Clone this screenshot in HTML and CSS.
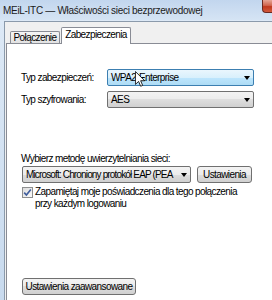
FILE: index.html
```html
<!DOCTYPE html>
<html>

<head>
  <title>MEiL-ITC — Właściwości sieci bezprzewodowej</title>
  <link rel="stylesheet" href="styles.css">
</head>

<body>
  <div class="window">
    <div class="titlebar">
      <span class="title">MEiL-ITC — Właściwości sieci bezprzewodowej</span>
      <span class="close"></span>
    </div>
    <div class="frame">
      <div class="client">
        <div class="tabs">
          <div class="tab">Połączenie</div>
          <div class="tab active">Zabezpieczenia</div>
        </div>
        <div class="panel">
          <div class="row">
            <span class="label">Typ zabezpieczeń:</span>
            <div class="combo hover"><span class="value">WPA2-Enterprise</span><span class="arrow"></span></div>
          </div>
          <div class="row second">
            <span class="label">Typ szyfrowania:</span>
            <div class="combo"><span class="value">AES</span><span class="arrow"></span></div>
          </div>

          <div class="method-label">Wybierz metodę uwierzytelniania sieci:</div>
          <div class="method-row">
            <div class="combo method"><span class="value">Microsoft: Chroniony protokół EAP (PEA</span><span class="arrow"></span></div>
            <div class="button settings">Ustawienia</div>
          </div>

          <div class="check-row">
            <span class="checkbox">
              <svg width="9" height="9" viewBox="0 0 9 9">
                <path d="M1.2 4.6 L3.4 7 L7.8 1.4" fill="none" stroke="#3f5d9c" stroke-width="1.6"/>
              </svg>
            </span>
            <span class="check-text">Zapamiętaj moje poświadczenia dla tego połączenia<br>przy każdym logowaniu</span>
          </div>

          <div class="button advanced">Ustawienia zaawansowane</div>
        </div>
      </div>
    </div>
  </div>

  <!-- mouse pointer over the first combo -->
  <svg class="cursor" width="10" height="16" viewBox="0 0 12 19">
    <path d="M0.5 0.5 L0.5 16 L4.3 12.4 L6.8 18.2 L9.2 17.2 L6.8 11.6 L11.6 11.6 Z" fill="#fff" stroke="#000" stroke-width="1"/>
  </svg>
</body>

</html>
```

FILE: styles.css
```css
body {
  margin: 0;
  width: 272px;
  height: 300px;
  overflow: hidden;
  position: relative;
  font-family: "Liberation Sans", Arial, sans-serif;
  font-size: 10px;
  letter-spacing: -0.6px;
  color: #000;
  background-color: #c9dbef;
}

.window {
  width: 272px;
  height: 300px;
  display: flex;
  flex-direction: column;
}

.titlebar {
  height: 20px;
  flex-shrink: 0;
  display: flex;
  align-items: flex-start;
  background: linear-gradient(#c2d6ee, #d5e4f4);
}

.title {
  margin: 5px 0 0 3px;
  font-size: 10px;
  letter-spacing: -0.3px;
  line-height: 12px;
  color: #1b1b1b;
  white-space: nowrap;
}

.close {
  margin-left: auto;
  width: 10px;
  height: 13px;
  box-sizing: border-box;
  border-left: 1px solid #6b2a22;
  border-bottom: 1px solid #6b2a22;
  border-radius: 0 0 0 4px;
  background: linear-gradient(#e6a596, #d0664f 45%, #c0391f 55%, #d25a3c);
}

.frame {
  flex: 1;
  display: flex;
  padding: 1px 0 0 4px;
  background: linear-gradient(#dde9f6, #c8daee);
}

.client {
  flex: 1;
  display: flex;
  flex-direction: column;
  border-top: 1px solid #8b9aab;
  border-left: 1px solid #8b9aab;
  background-color: #f0f0f0;
  padding: 5px 0 0 1px;
}

/* tabs */
.tabs {
  display: flex;
  align-items: flex-end;
  padding-left: 4px;
  position: relative;
  z-index: 1;
}

.tab {
  width: 48px;
  height: 11px;
  line-height: 11px;
  text-align: center;
  border: 1px solid #898c95;
  border-bottom: none;
  border-radius: 2px 2px 0 0;
  background: linear-gradient(#f5f5f5, #e2e2e2);
  white-space: nowrap;
}

.tab.active {
  width: 68px;
  height: 16px;
  line-height: 14px;
  margin-bottom: -1px;
  margin-left: 1px;
  background: #fff;
}

/* tab page */
.panel {
  flex: 1;
  border-top: 1px solid #898c95;
  border-left: 1px solid #898c95;
  background-color: #fff;
  padding: 25px 0 0 14px;
}

.row {
  display: flex;
  align-items: center;
}

.row.second {
  margin-top: 5px;
}

.label {
  width: 86px;
  white-space: nowrap;
}

.combo {
  width: 147px;
  height: 17px;
  box-sizing: border-box;
  display: flex;
  align-items: center;
  border: 1px solid #707070;
  border-radius: 2px;
  background: linear-gradient(#f3f3f3, #ececec 50%, #dedede 50%, #d0d0d0);
}

.combo.hover {
  border-color: #3c7fb1;
  background: linear-gradient(#eaf6fd, #d9f0fc 50%, #bee6fd 50%, #aedcf5);
}

.value {
  flex: 1;
  padding-left: 3px;
  white-space: nowrap;
}

.arrow {
  margin: 1px 3px 0 4px;
  width: 0;
  height: 0;
  border-left: 3.5px solid transparent;
  border-right: 3.5px solid transparent;
  border-top: 4px solid #000;
}

.method-label {
  margin-top: 45px;
  line-height: 12px;
}

.method-row {
  display: flex;
  gap: 6px;
  margin-top: 1px;
  padding-left: 1px;
}

.combo.method {
  width: 169px;
}

.combo.method .value {
  letter-spacing: -0.85px;
}

.button {
  height: 17px;
  box-sizing: border-box;
  line-height: 15px;
  text-align: center;
  border: 1px solid #707070;
  border-radius: 3px;
  background: linear-gradient(#f3f3f3, #ececec 50%, #dedede 50%, #d0d0d0);
  white-space: nowrap;
}

.button.settings {
  width: 55px;
}

.check-row {
  display: flex;
  align-items: flex-start;
  gap: 2px;
  margin-top: 3px;
  padding-left: 1px;
}

.checkbox {
  margin-top: 1px;
  width: 11px;
  height: 11px;
  box-sizing: border-box;
  border: 1px solid #8e8f8f;
  background: linear-gradient(135deg, #dcdcdc, #fbfbfb);
  display: flex;
  align-items: center;
  justify-content: center;
}

.check-text {
  line-height: 12px;
}

.button.advanced {
  width: 114px;
  margin-top: 68px;
  margin-left: 1px;
}

.cursor {
  position: absolute;
  left: 135px;
  top: 71px;
}
```
